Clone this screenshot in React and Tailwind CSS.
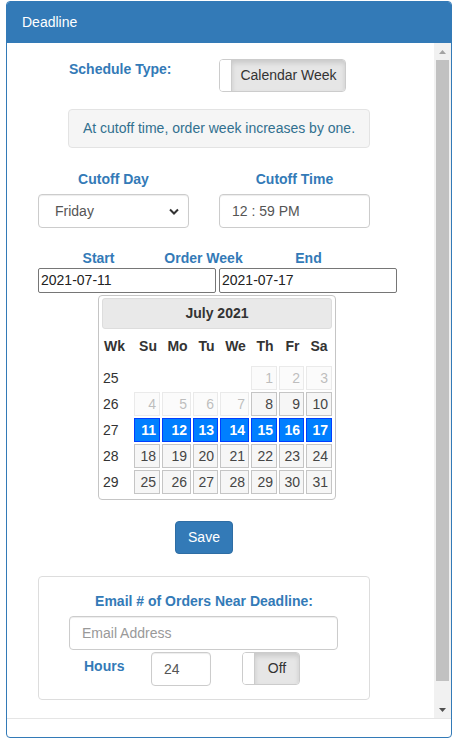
import React from 'react';

const font = { fontFamily: '"Liberation Sans", Arial, sans-serif' };

// calendar rows: week number + 7 day cells (null = empty)
const weeks = [
  { wk: 25, days: [null, null, null, null, [1, 'off'], [2, 'off'], [3, 'off']] },
  { wk: 26, days: [[4, 'off'], [5, 'off'], [6, 'off'], [7, 'off'], [8], [9], [10]] },
  { wk: 27, days: [[11, 'sel'], [12, 'sel'], [13, 'sel'], [14, 'sel'], [15, 'sel'], [16, 'sel'], [17, 'sel']] },
  { wk: 28, days: [[18], [19], [20], [21], [22], [23], [24]] },
  { wk: 29, days: [[25], [26], [27], [28], [29], [30], [31]] },
];

const dayNames = ['Su', 'Mo', 'Tu', 'We', 'Th', 'Fr', 'Sa'];
const gridCols = 'grid grid-cols-[31px_28px_31px_27px_31px_28px_27px_26px]';

const DayCell = ({ cell, last }) => {
  if (!cell) return <div />;
  const [d, state] = cell;
  const base = `h-[24px] border text-right pr-[3px] leading-[22px] text-[14px] ${last ? '' : 'mr-[2px]'}`;
  if (state === 'sel') {
    return <div className={`${base} bg-[#007fff] border-[#003eff] text-white font-bold`}>{d}</div>;
  }
  return (
    <div className={`${base} bg-[#f6f6f6] border-[#c5c5c5] text-[#454545] ${state === 'off' ? 'opacity-35' : ''}`}>
      {d}
    </div>
  );
};

const Calendar = () => (
  <div className="ml-[91px] mt-[2px] w-[238px] h-[205px] border border-[#c5c5c5] rounded-[4px] pt-[2px] px-[3px]">
    <div className="h-[31px] bg-[#e9e9e9] border border-[#dddddd] rounded-[3px] flex items-center justify-center font-bold text-[14px] text-[#333]">
      July 2021
    </div>
    <div className={`${gridCols} ml-[1px] mt-[2px] h-[30px] items-center font-bold text-[14px] text-[#333]`}>
      <div className="pl-[1px]">Wk</div>
      {dayNames.map((n) => (
        <div key={n} className="text-center">{n}</div>
      ))}
    </div>
    <div className="ml-[1px] pt-[5px] flex flex-col gap-y-[2px]">
      {weeks.map((w) => (
        <div key={w.wk} className={`${gridCols} h-[24px]`}>
          <div className="leading-[24px] text-[14px] text-[#333]">{w.wk}</div>
          {w.days.map((c, i) => (
            <DayCell key={i} cell={c} last={i === 6} />
          ))}
        </div>
      ))}
    </div>
  </div>
);

const Toggle = ({ label, width }) => (
  <div className={`${width} h-[33px] border border-[#cccccc] rounded-[4px] overflow-hidden flex`}>
    <div className="w-[12px] bg-white border-r border-[#cccccc]" />
    <div className="flex-1 bg-[#e6e6e6] shadow-[inset_0_3px_5px_rgba(0,0,0,0.125)] flex items-center justify-center text-[14px] text-[#333]">
      {label}
    </div>
  </div>
);

const Field = ({ className, children }) => (
  <div
    className={`h-[34px] border border-[#cccccc] rounded-[4px] bg-white shadow-[inset_0_1px_1px_rgba(0,0,0,0.075)] flex items-center text-[14px] text-[#555] ${className}`}
  >
    {children}
  </div>
);

const Label = ({ className = '', children }) => (
  <div className={`font-bold text-[14px] leading-[20px] text-[#337ab7] ${className}`}>{children}</div>
);

const Scrollbar = () => (
  <div className="w-[17px] bg-[#f1f1f1] flex flex-col">
    <div className="h-[17px] flex items-center justify-center">
      <svg width="7" height="4" viewBox="0 0 7 4">
        <path d="M0 4 L3.5 0 L7 4 Z" fill="#a3a3a3" />
      </svg>
    </div>
    <div className="h-[621px] mx-[2px] bg-[#c1c1c1]" />
    <div className="flex-1" />
    <div className="h-[17px] flex items-center justify-center">
      <svg width="7" height="4" viewBox="0 0 7 4">
        <path d="M0 0 L7 0 L3.5 4 Z" fill="#505050" />
      </svg>
    </div>
  </div>
);

export default function App() {
  return (
    <div className="w-[461px] h-[742px] bg-white pl-[6px] pt-[1px]" style={font}>
      <div className="w-[446px] h-[737px] border border-[#337ab7] rounded-[4px] overflow-hidden flex flex-col">
        {/* header */}
        <div className="h-[41px] bg-[#337ab7] text-white text-[14px] pl-[15px] flex items-center">Deadline</div>

        {/* body */}
        <div className="h-[675px] flex">
          <div className="flex-1 flex flex-col">
            <div className="mt-[16px] flex items-start">
              <Label className="ml-[62px] w-[150px]">Schedule Type:</Label>
              <Toggle label="Calendar Week" width="w-[127px]" />
            </div>

            <div className="ml-[61px] mt-[17px] w-[302px] h-[39px] bg-[#f5f5f5] border border-[#e3e3e3] rounded-[4px] flex items-center justify-center text-[14px] text-[#31708f]">
              At cutoff time, order week increases by one.
            </div>

            <div className="ml-[31px] mt-[21px] flex gap-[30px]">
              <div className="w-[151px]">
                <Label className="text-center">Cutoff Day</Label>
                <Field className="mt-[5px] pl-[16px] pr-[9px] justify-between">
                  <span>Friday</span>
                  <svg width="10" height="7" viewBox="0 0 10 7">
                    <path d="M1 1.5 L5 5.5 L9 1.5" fill="none" stroke="#333" strokeWidth="2" />
                  </svg>
                </Field>
              </div>
              <div className="w-[151px]">
                <Label className="text-center">Cutoff Time</Label>
                <Field className="mt-[5px] pl-[12px]">12 : 59 PM</Field>
              </div>
            </div>

            <div className="ml-[39px] mt-[20px] flex">
              <Label className="w-[105px] text-center">Start</Label>
              <Label className="w-[105px] text-center">Order Week</Label>
              <Label className="w-[105px] text-center">End</Label>
            </div>
            <div className="ml-[31px] flex gap-[3px]">
              <div className="w-[178px] h-[25px] border border-[#767676] rounded-[2px] pl-[2px] text-[14px] leading-[23px] text-[#222]">
                2021-07-11
              </div>
              <div className="w-[178px] h-[25px] border border-[#767676] rounded-[2px] pl-[2px] text-[14px] leading-[23px] text-[#222]">
                2021-07-17
              </div>
            </div>

            <Calendar />

            <button className="ml-[168px] mt-[21px] w-[58px] h-[33px] bg-[#337ab7] border border-[#2e6da4] rounded-[4px] text-white text-[14px]">
              Save
            </button>

            <div className="ml-[31px] mt-[22px] w-[332px] h-[124px] border border-[#dddddd] rounded-[4px] pt-[14px]">
              <Label className="text-center">Email # of Orders Near Deadline:</Label>
              <Field className="ml-[30px] mt-[5px] w-[269px] h-[33px] pl-[12px] text-[#999]">Email Address</Field>
              <div className="mt-[2px] flex items-start">
                <Label className="ml-[45px] w-[67px] pt-[4px]">Hours</Label>
                <Field className="w-[60px] h-[32px] pl-[12px]">24</Field>
                <div className="ml-[31px]">
                  <Toggle label="Off" width="w-[58px]" />
                </div>
              </div>
            </div>
          </div>
          <Scrollbar />
        </div>

        {/* footer */}
        <div className="flex-1 border-t border-[#e5e5e5]" />
      </div>
    </div>
  );
}
